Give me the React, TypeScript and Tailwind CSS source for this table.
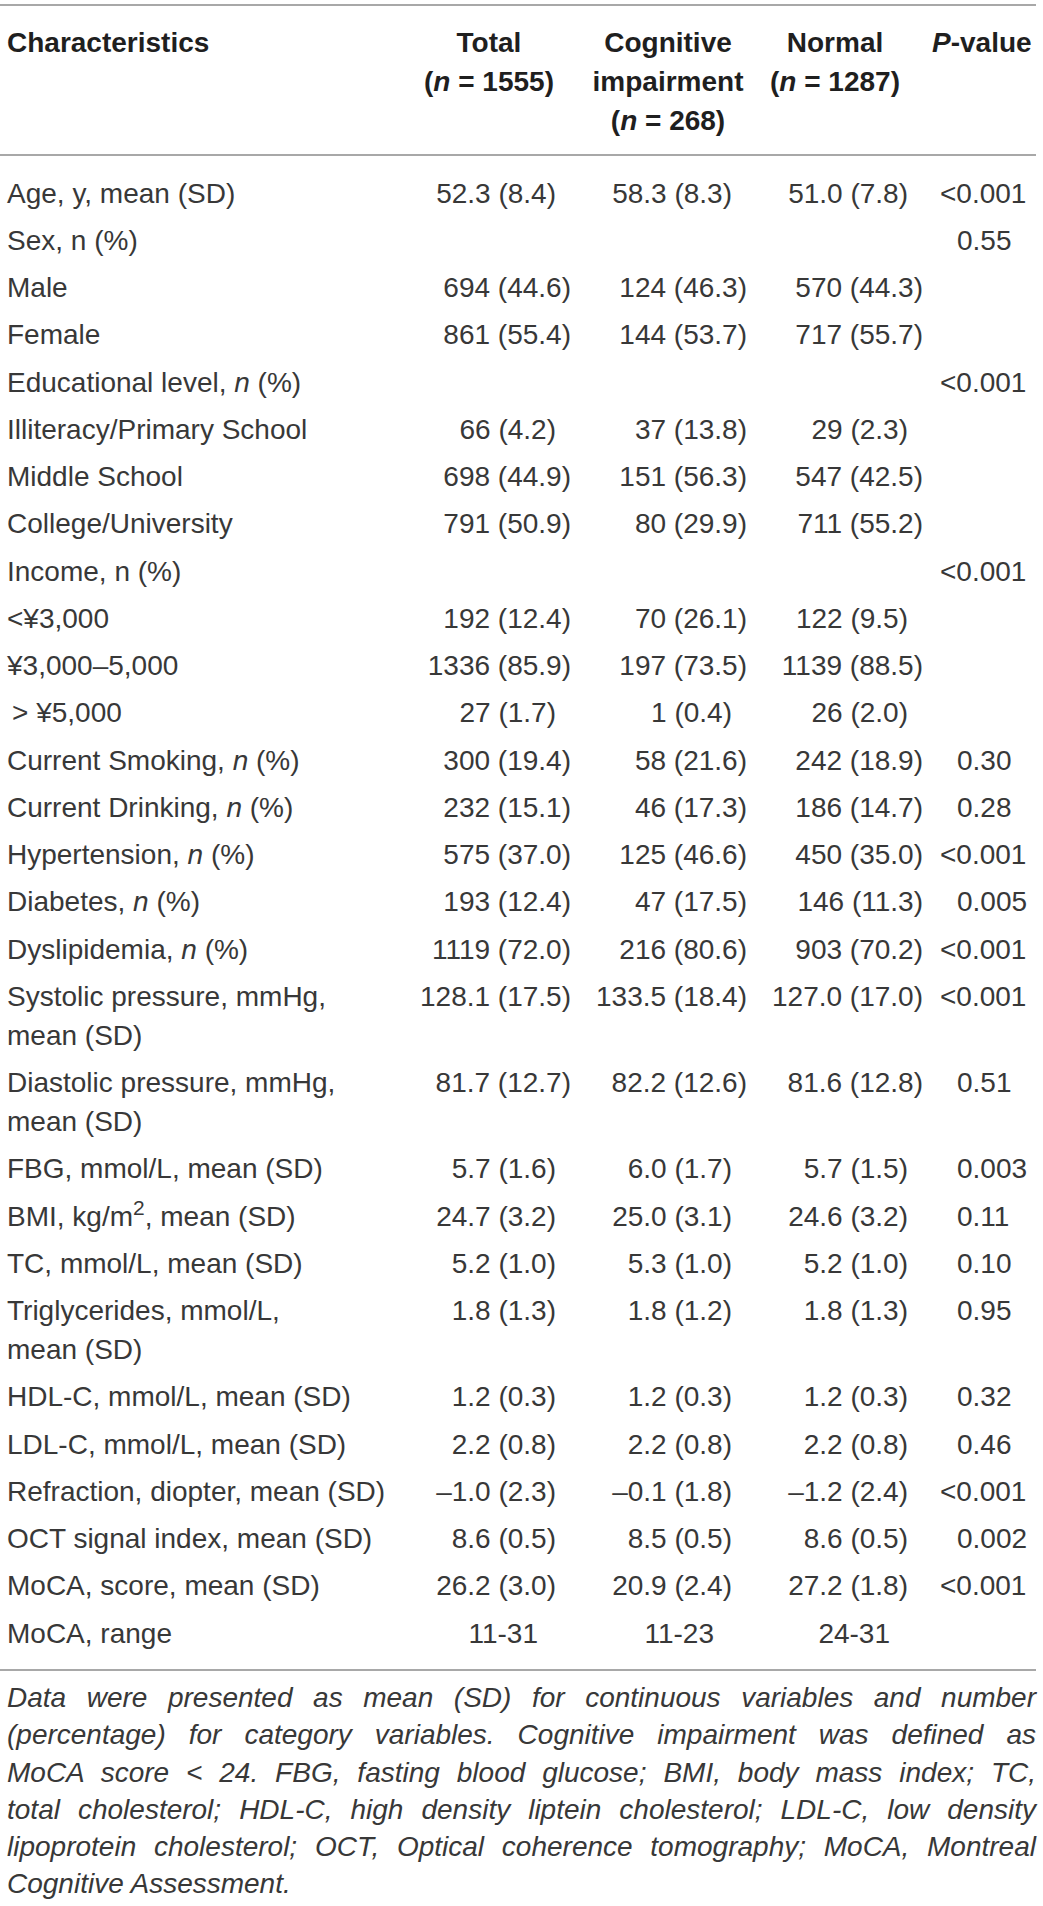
import React from "react";

type Row = {
  label: React.ReactNode;
  t?: string;
  c?: string;
  n?: string;
  p?: string;
};

const n = <i>n</i>;

const rows: Row[] = [
  { label: "Age, y, mean (SD)", t: "52.3 (8.4)", c: "58.3 (8.3)", n: "51.0 (7.8)", p: "<0.001" },
  { label: "Sex, n (%)", p: "0.55" },
  { label: "Male", t: "694 (44.6)", c: "124 (46.3)", n: "570 (44.3)" },
  { label: "Female", t: "861 (55.4)", c: "144 (53.7)", n: "717 (55.7)" },
  { label: <>Educational level, {n} (%)</>, p: "<0.001" },
  { label: "Illiteracy/Primary School", t: "66 (4.2)", c: "37 (13.8)", n: "29 (2.3)" },
  { label: "Middle School", t: "698 (44.9)", c: "151 (56.3)", n: "547 (42.5)" },
  { label: "College/University", t: "791 (50.9)", c: "80 (29.9)", n: "711 (55.2)" },
  { label: "Income, n (%)", p: "<0.001" },
  { label: "<¥3,000", t: "192 (12.4)", c: "70 (26.1)", n: "122 (9.5)" },
  { label: "¥3,000–5,000", t: "1336 (85.9)", c: "197 (73.5)", n: "1139 (88.5)" },
  { label: <><span className="pl-[5px]">&gt;</span> ¥5,000</>, t: "27 (1.7)", c: "1 (0.4)", n: "26 (2.0)" },
  { label: <>Current Smoking, {n} (%)</>, t: "300 (19.4)", c: "58 (21.6)", n: "242 (18.9)", p: "0.30" },
  { label: <>Current Drinking, {n} (%)</>, t: "232 (15.1)", c: "46 (17.3)", n: "186 (14.7)", p: "0.28" },
  { label: <>Hypertension, {n} (%)</>, t: "575 (37.0)", c: "125 (46.6)", n: "450 (35.0)", p: "<0.001" },
  { label: <>Diabetes, {n} (%)</>, t: "193 (12.4)", c: "47 (17.5)", n: "146 (11.3)", p: "0.005" },
  { label: <>Dyslipidemia, {n} (%)</>, t: "1119 (72.0)", c: "216 (80.6)", n: "903 (70.2)", p: "<0.001" },
  { label: <>Systolic pressure, mmHg,<br />mean (SD)</>, t: "128.1 (17.5)", c: "133.5 (18.4)", n: "127.0 (17.0)", p: "<0.001" },
  { label: <>Diastolic pressure, mmHg,<br />mean (SD)</>, t: "81.7 (12.7)", c: "82.2 (12.6)", n: "81.6 (12.8)", p: "0.51" },
  { label: "FBG, mmol/L, mean (SD)", t: "5.7 (1.6)", c: "6.0 (1.7)", n: "5.7 (1.5)", p: "0.003" },
  { label: <>BMI, kg/m<sup>2</sup>, mean (SD)</>, t: "24.7 (3.2)", c: "25.0 (3.1)", n: "24.6 (3.2)", p: "0.11" },
  { label: "TC, mmol/L, mean (SD)", t: "5.2 (1.0)", c: "5.3 (1.0)", n: "5.2 (1.0)", p: "0.10" },
  { label: <>Triglycerides, mmol/L,<br />mean (SD)</>, t: "1.8 (1.3)", c: "1.8 (1.2)", n: "1.8 (1.3)", p: "0.95" },
  { label: "HDL-C, mmol/L, mean (SD)", t: "1.2 (0.3)", c: "1.2 (0.3)", n: "1.2 (0.3)", p: "0.32" },
  { label: "LDL-C, mmol/L, mean (SD)", t: "2.2 (0.8)", c: "2.2 (0.8)", n: "2.2 (0.8)", p: "0.46" },
  { label: "Refraction, diopter, mean (SD)", t: "–1.0 (2.3)", c: "–0.1 (1.8)", n: "–1.2 (2.4)", p: "<0.001" },
  { label: "OCT signal index, mean (SD)", t: "8.6 (0.5)", c: "8.5 (0.5)", n: "8.6 (0.5)", p: "0.002" },
  { label: "MoCA, score, mean (SD)", t: "26.2 (3.0)", c: "20.9 (2.4)", n: "27.2 (1.8)", p: "<0.001" },
  { label: "MoCA, range", t: "11-31", c: "11-23", n: "24-31" },
];

// figures are right aligned, with the one-digit SD entries held back by a digit
function pad(v?: string) {
  if (!v) return "pr-[9px]";
  if (/^\d+-\d+$/.test(v)) return "pr-[42px]";
  if (/\(\d\./.test(v)) return "pr-[24px]";
  return "pr-[9px]";
}

function PVal({ v }: { v?: string }) {
  if (!v) return null;
  if (v.startsWith("<"))
    return (
      <>
        <span className="ml-[-17px]">&lt;</span>
        {v.slice(1)}
      </>
    );
  return <>{v}</>;
}

const note = [
  "Data were presented as mean (SD) for continuous variables and number",
  "(percentage) for category variables. Cognitive impairment was defined as",
  "MoCA score < 24. FBG, fasting blood glucose; BMI, body mass index; TC,",
  "total cholesterol; HDL-C, high density liptein cholesterol; LDL-C, low density",
  "lipoprotein cholesterol; OCT, Optical coherence tomography; MoCA, Montreal",
];

export default function App() {
  return (
    <div className="w-[1043px] min-h-[1906px] bg-white pt-[4px] font-['Liberation_Sans',Arial,sans-serif] text-[28px] text-[#383838]">
      <div className="w-[1036px]">
        <div className="h-[2px] bg-[#a8a8a8]" />

        <div className="flex pt-[17px] pb-[14px] font-bold leading-[39px] text-[#1f1f1f]">
          <div className="w-[404px] pl-[7px]">Characteristics</div>
          <div className="w-[176px] pr-[6px] text-center">
            <div>Total</div>
            <div>
              (<i>n</i> = 1555)
            </div>
          </div>
          <div className="w-[176px] text-center">
            <div>Cognitive</div>
            <div>impairment</div>
            <div>
              (<i>n</i> = 268)
            </div>
          </div>
          <div className="w-[176px] pr-[18px] text-center">
            <div>Normal</div>
            <div>
              (<i>n</i> = 1287)
            </div>
          </div>
          <div className="w-[104px] pr-[12px] text-center whitespace-nowrap">
            <i>P</i>-value
          </div>
        </div>

        <div className="h-[2px] bg-[#a8a8a8]" />

        <div className="pt-[13.5px] pb-[12px]">
          {rows.map((r, i) => (
            <div key={i} className="flex py-[4.125px] leading-[39px]">
              <div className="w-[404px] pl-[7px]">{r.label}</div>
              <div className={`w-[176px] text-right ${pad(r.t)}`}>{r.t}</div>
              <div className={`w-[176px] text-right ${pad(r.c)}`}>{r.c}</div>
              <div className={`w-[176px] text-right ${pad(r.n)}`}>{r.n}</div>
              <div className="w-[104px] pl-[25px] whitespace-nowrap">
                <PVal v={r.p} />
              </div>
            </div>
          ))}
        </div>

        <div className="h-[2px] bg-[#a8a8a8]" />

        <div className="pt-[8.5px] pl-[7px] italic leading-[37.2px]">
          {note.map((l, i) => (
            <div key={i} className="text-justify [text-align-last:justify]">
              {l}
            </div>
          ))}
          <div>Cognitive Assessment.</div>
        </div>
      </div>
    </div>
  );
}
